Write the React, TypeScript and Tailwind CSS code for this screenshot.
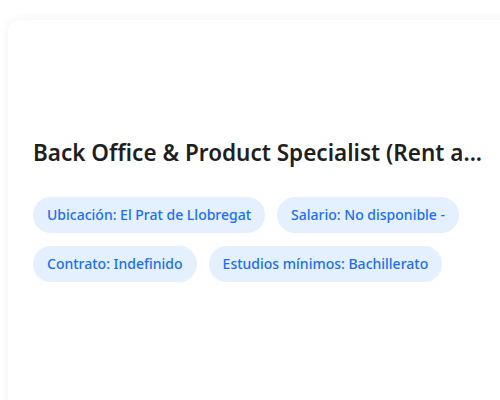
const tags = [
  "Ubicación: El Prat de Llobregat",
  "Salario: No disponible -",
  "Contrato: Indefinido",
  "Estudios mínimos: Bachillerato",
];

export default function App() {
  return (
    <div className="h-[400px] w-[500px] overflow-hidden bg-white pl-2 pt-5 font-['Noto_Sans',sans-serif]">
      <div className="h-[420px] w-[520px] rounded-xl bg-white pl-[25px] pt-[117px] shadow-[0_0_12px_rgba(0,0,0,0.06)]">
        <h2 className="w-[460px] whitespace-nowrap text-[22.5px] font-semibold leading-[32px] text-[#1f1f1f]">
          Back Office &amp; Product Specialist (Rent a...
        </h2>
        <div className="mt-[28px] flex w-[452px] flex-wrap gap-x-3 gap-y-[13px]">
          {tags.map((t) => (
            <span
              key={t}
              className="flex h-9 items-center rounded-full bg-[#e5f0ff] px-[14px] text-sm font-medium text-[#1a6ef5]"
            >
              {t}
            </span>
          ))}
        </div>
      </div>
    </div>
  );
}
